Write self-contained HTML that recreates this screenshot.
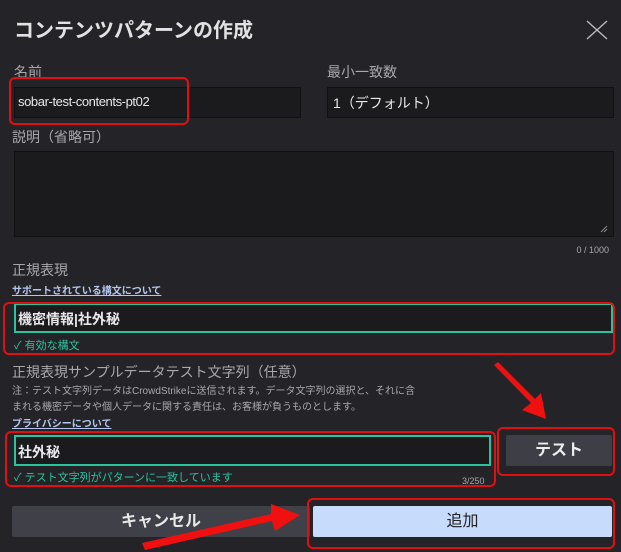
<!DOCTYPE html>
<html><head><meta charset="utf-8"><style>
*{margin:0;padding:0;box-sizing:border-box}
body{width:621px;height:552px;background:#242428;font-family:"Liberation Sans","Noto Sans CJK JP",sans-serif;position:relative;overflow:hidden;color:#ddd}
.a{position:absolute;white-space:nowrap}
.lbl{font-size:14px;color:#a8a8ac}
.inp{position:absolute;background:#1b1b1d;border:1px solid #111;}
.red{position:absolute;border:2px solid #e01010;border-radius:6px}
.link{font-size:10px;color:#b5c6ee;text-decoration:underline;font-weight:bold}
.ok{font-size:11px;color:#2ac3a0}
</style></head><body>
<div class="a" style="left:14px;top:14px;font-size:20px;font-weight:bold;color:#e2e2e2">コンテンツパターンの作成</div>
<svg class="a" style="left:584px;top:19px" width="26" height="22"><path d="M3 2L23 20M23 2L3 20" stroke="#bbb" stroke-width="1.4"/></svg>

<div class="a lbl" style="left:14px;top:62px">名前</div>
<div class="inp" style="left:14px;top:87px;width:287px;height:31px"></div>
<div class="a" style="left:18px;top:94px;font-size:13px;letter-spacing:-0.4px;color:#e8e8e8">sobar-test-contents-pt02</div>
<div class="red" style="left:9px;top:77px;width:180px;height:48px"></div>
<div class="a lbl" style="left:327px;top:62px">最小一致数</div>
<div class="inp" style="left:327px;top:87px;width:287px;height:31px"></div>
<div class="a" style="left:333px;top:93px;font-size:14px;color:#e8e8e8">1（デフォルト）</div>

<div class="a lbl" style="left:12px;top:127px">説明（省略可）</div>
<div class="inp" style="left:14px;top:151px;width:600px;height:86px"></div>
<svg class="a" style="left:600px;top:225px" width="8" height="8"><path d="M1 7L7 1M4 7L7 4" stroke="#888"/></svg>
<div class="a" style="right:12px;top:245px;font-size:9px;color:#aaa">0 / 1000</div>

<div class="a lbl" style="left:12px;top:260px">正規表現</div>
<div class="a link" style="left:12px;top:282px">サポートされている構文について</div>
<div class="inp" style="left:14px;top:303px;width:599px;height:30px;border:2px solid #2ac3a0"></div>
<div class="a" style="left:18px;top:309px;font-size:14px;font-weight:bold;color:#e8e8e8">機密情報|社外秘</div>
<div class="a ok" style="left:14px;top:337px">✓ 有効な構文</div>
<div class="red" style="left:3px;top:302px;width:612px;height:53px"></div>

<div class="a lbl" style="left:12px;top:362px">正規表現サンプルデータテスト文字列（任意）</div>
<div class="a" style="left:12px;top:384px;font-size:10px;color:#a8a8ac;line-height:16px">注：テスト文字列データはCrowdStrikeに送信されます。データ文字列の選択と、それに含<br>まれる機密データや個人データに関する責任は、お客様が負うものとします。</div>
<div class="a link" style="left:12px;top:415px">プライバシーについて</div>
<div class="inp" style="left:14px;top:435px;width:477px;height:31px;border:2px solid #2ac3a0"></div>
<div class="a" style="left:18px;top:442px;font-size:14px;font-weight:bold;color:#e8e8e8">社外秘</div>
<div class="a ok" style="left:14px;top:469px">✓ テスト文字列がパターンに一致しています</div>
<div class="a" style="left:462px;top:476px;font-size:9px;color:#aaa">3/250</div>
<div class="red" style="left:5px;top:431px;width:491px;height:56px"></div>

<div class="a" style="left:506px;top:435px;width:106px;height:31px;background:#3e3e46;border-radius:2px;color:#eee;font-weight:bold;font-size:16px;text-align:center;line-height:31px">テスト</div>
<div class="red" style="left:497px;top:427px;width:118px;height:49px"></div>

<div class="a" style="left:12px;top:506px;width:298px;height:31px;background:#404048;border-radius:2px;color:#e8e8e8;font-weight:bold;font-size:16px;text-align:center;line-height:31px">キャンセル</div>
<div class="a" style="left:313px;top:506px;width:299px;height:31px;background:#c7dcfd;border-radius:2px;color:#222;font-size:16px;text-align:center;line-height:31px">追加</div>
<div class="red" style="left:307px;top:498px;width:308px;height:51px"></div>

<svg class="a" style="left:0;top:0" width="621" height="552">
<path d="M412 366L528 405L521 410L546 420L541 393L534 400Z" fill="#f01010" transform="translate(0,0)" style="display:none"/>
<path d="M494 365L531 403L522 410L546 419L541 393L535 399L498 362Z" fill="#f01010"/>
<path d="M142 551L232 518L231 526L250 516L229 505L230 513L138 546Z" fill="#f01010" style="display:none"/>
<path d="M145 550L272 521L275 531L300 515L271 504L271 514L142 543Z" fill="#f01010"/>
</svg>
</body></html>
